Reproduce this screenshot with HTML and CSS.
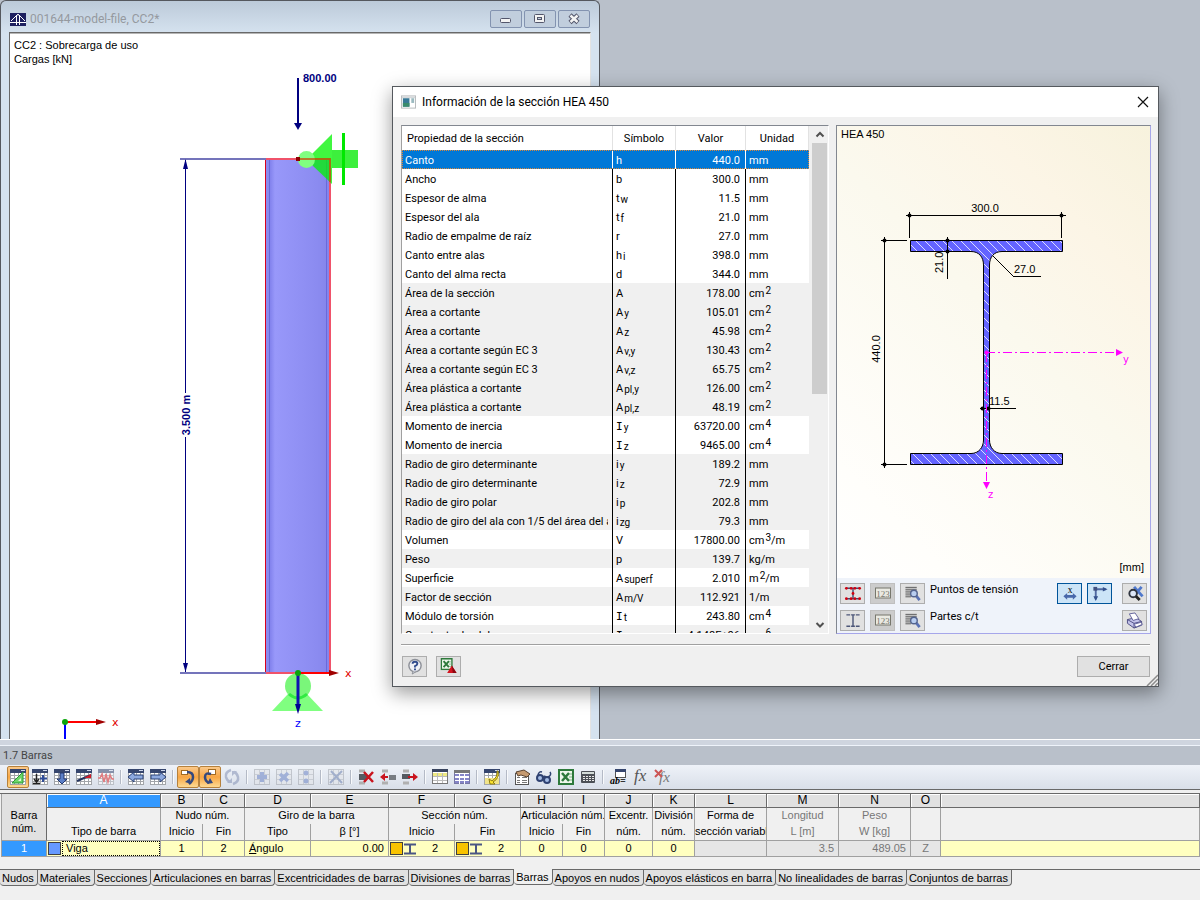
FILE: index.html
```html
<!DOCTYPE html>
<html lang="es">
<head>
    <meta charset="UTF-8">
    <meta name="viewport" content="width=device-width, initial-scale=1.0">
    <title>Información de la sección HEA 450</title>
    <link rel="stylesheet" href="styles.css">
</head>
<body>
    <!-- shared icon parts -->
    <svg class="sprite" aria-hidden="true">
        <symbol id="grid" viewBox="0 0 16 16">
            <rect x="0" y="1" width="16" height="14" fill="#fff"/>
            <path d="M.5 1V15M4.5 1V15M8.5 1V15M12.5 1V15M15.5 1V15M0 6.5H16M0 9.5H16M0 12.5H16M0 15.5H16" stroke="#a2a5a9" fill="none"/>
            <rect x="0" y="0" width="16" height="4" fill="#36466e"/>
            <rect x="11" y="1" width="4" height="1" fill="#cdd6ea"/>
        </symbol>
        <symbol id="cellgrid" viewBox="0 0 16 16">
            <rect x=".5" y=".5" width="15" height="15" fill="#e4e6ea" stroke="#a3a7ae"/>
            <path d="M5.5 1V15M10.5 1V15M1 5.5H15M1 10.5H15" stroke="#b4b8bf"/>
        </symbol>
        <symbol id="numbox" viewBox="0 0 18 16">
            <rect x="1.500" y="2.500" width="15" height="10" fill="#e9e9e2" stroke="#77776d"/>
            <text x="9" y="11" text-anchor="middle" font-size="9" font-family="Liberation Serif, serif" fill="#77776d">123</text>
        </symbol>
        <symbol id="report" viewBox="0 0 18 18">
            <path d="M1 2.500H13M1 4.500H13M1 6.500H8M1 8.500H7M1 10.500H7M1 12.500H7" stroke="#555"/>
            <path d="M12 11L16 16" stroke="#5a72b5" stroke-width="3"/>
            <circle cx="10" cy="9" r="3.500" fill="#b8cdf0" stroke="#54648e" stroke-width="1.500"/>
        </symbol>
        <symbol id="excel" viewBox="0 0 16 16">
            <rect x="1" y="1" width="14" height="14" fill="#eef7ec" stroke="#2e7a3c" stroke-width="2"/>
            <path d="M4 4L11 12M11 4L4 12" stroke="#2e7a3c" stroke-width="2.500"/>
            <path d="M11 5H14M11 8H14M11 11H14" stroke="#7ab383"/>
        </symbol>
        <symbol id="beam" viewBox="0 0 12 12">
            <path d="M0 1.500H12M0 10.500H12" stroke="#4a5684" stroke-width="2"/>
            <path d="M6 1V11" stroke="#4a5684" stroke-width="2"/>
        </symbol>
    </svg>

    <main class="workspace">
        <section class="model-window">
            <header class="model-title">
                <svg class="app-icon" viewBox="0 0 16 13">
                    <rect width="16" height="13" fill="#1d2060"/>
                    <path d="M0 9.500H16" stroke="#fff"/>
                    <path d="M6.500 12V3L8 1L9.500 3V12M7 2L1 8M9 2L15 8" stroke="#fff" fill="none"/>
                </svg>
                <h1>001644-model-file, CC2*</h1>
                <div class="window-buttons">
                    <button type="button" aria-label="Minimizar"><svg viewBox="0 0 14 12"><rect x="1.500" y="5.500" width="10" height="4" rx="1" fill="#f3f3f3" stroke="#53566b"/></svg></button>
                    <button type="button" aria-label="Maximizar"><svg viewBox="0 0 14 12"><rect x="1.500" y="1.500" width="10" height="8" rx="1" fill="#f3f3f3" stroke="#53566b"/><rect x="4.500" y="4.500" width="4" height="2" fill="#c4d0df" stroke="#53566b"/></svg></button>
                    <button type="button" aria-label="Cerrar ventana"><svg viewBox="0 0 14 12"><path d="M3 2L11 9.500M11 2L3 9.500" stroke="#53566b" stroke-width="4.500"/><path d="M3.500 2.500L10.500 9M10.500 2.500L3.500 9" stroke="#f3f3f3" stroke-width="2.500"/></svg></button>
                </div>
            </header>
            <div class="model-view">
                <svg class="model-drawing" viewBox="10 34 580 706" preserveAspectRatio="xMinYMin slice">
                    <defs>
                        <linearGradient id="column">
                            <stop offset="0" stop-color="#8c8cee"/>
                            <stop offset=".07" stop-color="#8484ee"/>
                            <stop offset=".14" stop-color="#9898fa"/>
                            <stop offset=".8" stop-color="#8b8bf0"/>
                            <stop offset="1" stop-color="#8484ea"/>
                        </linearGradient>
                    </defs>
                    <g class="note">
                        <text x="14" y="49">CC2 : Sobrecarga de uso</text>
                        <text x="14" y="63">Cargas [kN]</text>
                    </g>
                    <!-- column -->
                    <rect x="266" y="159" width="64" height="514" fill="url(#column)"/>
                    <path d="M326.500 160V672M269.500 160V672" stroke="#6969dc"/>
                    <path d="M265.500 673V159" stroke="#d8001c"/>
                    <path d="M265 159H331M330 159V673M265 673H330" stroke="#f0526a" stroke-width="2" fill="none"/>
                    <!-- length dimension -->
                    <path d="M180 159H266M180 673H266" stroke="#7474bb" stroke-width="2"/>
                    <path d="M185.500 160V393M185.500 437V672" stroke="#000080"/>
                    <path d="M185.500 159L188 169H183ZM185.500 672L188 663H183Z" fill="#000080"/>
                    <text class="strong" transform="translate(190 415) rotate(-90)" text-anchor="middle">3.500 m</text>
                    <!-- load -->
                    <path d="M298 78V124" stroke="#000080" stroke-width="2"/>
                    <path d="M294 123H302L298 130Z" fill="#000080"/>
                    <text class="strong" x="303" y="82">800.00</text>
                    <!-- upper support -->
                    <path d="M312 154L332 134V184L312 165Z" fill="#00f400" fill-opacity=".75"/>
                    <rect x="332" y="150" width="26" height="18" fill="#0ceb0c" fill-opacity=".8"/>
                    <path d="M343.500 133V185" stroke="#00e800" stroke-width="3"/>
                    <circle cx="306.500" cy="159.500" r="8.500" fill="#80ff80"/>
                    <path d="M298 159H330V182" stroke="#c85010" fill="none" stroke-width="1.500"/>
                    <rect x="296" y="157" width="4" height="4" fill="#900000"/>
                    <!-- lower support -->
                    <path d="M288 694L272 711H323L307 694Z" fill="#80ff80"/>
                    <circle cx="298" cy="686" r="13" fill="#7af67a"/>
                    <path d="M289 694Q298 702 307 694" stroke="#32ea42" stroke-width="3" fill="none"/>
                    <path d="M298 673V705" stroke="#1010b0" stroke-width="3"/>
                    <path d="M295 704H301L298 714Z" fill="#000090"/>
                    <path d="M298 673H330" stroke="#f00" stroke-width="2"/>
                    <path d="M329 670L339 673L329 676Z" fill="#a00000"/>
                    <circle cx="298" cy="673" r="3" fill="#0aa50a"/>
                    <text class="axis red" x="345" y="677">x</text>
                    <text class="axis blue" x="295" y="727">z</text>
                    <!-- global axes -->
                    <path d="M65 722H97" stroke="#f00" stroke-width="2"/>
                    <path d="M96 719L106 722L96 725Z" fill="#a00000"/>
                    <path d="M65 722V740" stroke="#00f" stroke-width="2"/>
                    <circle cx="65" cy="722" r="3" fill="#0aa50a"/>
                    <text class="axis red" x="112" y="726">x</text>
                </svg>
            </div>
        </section>

        <section class="dialog" role="dialog" aria-labelledby="dialogTitle">
            <header class="dialog-title">
                <svg class="dialog-icon" viewBox="0 0 16 14">
                    <rect x=".5" y=".5" width="15" height="13" fill="#fff" stroke="#b5b9bb"/>
                    <rect x="1" y="1" width="14" height="2" fill="#d4d8da"/>
                    <rect x="2" y="3" width="7" height="9" fill="#377997"/>
                    <rect x="2" y="8" width="7" height="4" fill="#398b6c"/>
                    <rect x="11" y="3" width="3" height="5" fill="#9bbac0"/>
                </svg>
                <h2 id="dialogTitle">Información de la sección HEA 450</h2>
                <button class="dialog-close" type="button" aria-label="Cerrar diálogo"><svg viewBox="0 0 12 12"><path d="M1 1L11 11M11 1L1 11" stroke="#111" fill="none" stroke-width="1.200"/></svg></button>
            </header>

            <div class="dialog-body">
                <div class="properties">
                    <div class="properties-scroll">
                        <table class="props">
                            <colgroup><col><col class="c-symbol"><col class="c-value"><col class="c-unit"></colgroup>
                            <thead>
                                <tr><th>Propiedad de la sección</th><th>Símbolo</th><th>Valor</th><th>Unidad</th></tr>
                            </thead>
                            <tbody>
                                <tr class="selected"><td>Canto</td><td>h</td><td>440.0</td><td>mm</td></tr>
                                <tr><td>Ancho</td><td>b</td><td>300.0</td><td>mm</td></tr>
                                <tr><td>Espesor de alma</td><td>t<sub>w</sub></td><td>11.5</td><td>mm</td></tr>
                                <tr><td>Espesor del ala</td><td>t<sub>f</sub></td><td>21.0</td><td>mm</td></tr>
                                <tr><td>Radio de empalme de raíz</td><td>r</td><td>27.0</td><td>mm</td></tr>
                                <tr><td>Canto entre alas</td><td>h<sub>i</sub></td><td>398.0</td><td>mm</td></tr>
                                <tr><td>Canto del alma recta</td><td>d</td><td>344.0</td><td>mm</td></tr>
                                <tr class="alt"><td>Área de la sección</td><td>A</td><td>178.00</td><td>cm<sup>2</sup></td></tr>
                                <tr class="alt"><td>Área a cortante</td><td>A<sub>y</sub></td><td>105.01</td><td>cm<sup>2</sup></td></tr>
                                <tr class="alt"><td>Área a cortante</td><td>A<sub>z</sub></td><td>45.98</td><td>cm<sup>2</sup></td></tr>
                                <tr class="alt"><td>Área a cortante según EC 3</td><td>A<sub>v,y</sub></td><td>130.43</td><td>cm<sup>2</sup></td></tr>
                                <tr class="alt"><td>Área a cortante según EC 3</td><td>A<sub>v,z</sub></td><td>65.75</td><td>cm<sup>2</sup></td></tr>
                                <tr class="alt"><td>Área plástica a cortante</td><td>A<sub>pl,y</sub></td><td>126.00</td><td>cm<sup>2</sup></td></tr>
                                <tr class="alt"><td>Área plástica a cortante</td><td>A<sub>pl,z</sub></td><td>48.19</td><td>cm<sup>2</sup></td></tr>
                                <tr><td>Momento de inercia</td><td><span class="cap-i">I</span><sub>y</sub></td><td>63720.00</td><td>cm<sup>4</sup></td></tr>
                                <tr><td>Momento de inercia</td><td><span class="cap-i">I</span><sub>z</sub></td><td>9465.00</td><td>cm<sup>4</sup></td></tr>
                                <tr class="alt"><td>Radio de giro determinante</td><td>i<sub>y</sub></td><td>189.2</td><td>mm</td></tr>
                                <tr class="alt"><td>Radio de giro determinante</td><td>i<sub>z</sub></td><td>72.9</td><td>mm</td></tr>
                                <tr class="alt"><td>Radio de giro polar</td><td>i<sub>p</sub></td><td>202.8</td><td>mm</td></tr>
                                <tr class="alt"><td><div class="clip">Radio de giro del ala con 1/5 del área del a</div></td><td>i<sub>zg</sub></td><td>79.3</td><td>mm</td></tr>
                                <tr><td>Volumen</td><td>V</td><td>17800.00</td><td>cm<sup>3</sup>/m</td></tr>
                                <tr class="alt"><td>Peso</td><td>p</td><td>139.7</td><td>kg/m</td></tr>
                                <tr><td>Superficie</td><td>A<sub>superf</sub></td><td>2.010</td><td>m<sup>2</sup>/m</td></tr>
                                <tr class="alt"><td>Factor de sección</td><td>A<sub>m/V</sub></td><td>112.921</td><td>1/m</td></tr>
                                <tr><td>Módulo de torsión</td><td><span class="cap-i">I</span><sub>t</sub></td><td>243.80</td><td>cm<sup>4</sup></td></tr>
                                <tr class="alt"><td>Constante de alabeo</td><td><span class="cap-i">I</span></td><td>4.148E+06</td><td>cm<sup>6</sup></td></tr>
                            </tbody>
                        </table>
                    </div>
                    <div class="scrollbar" aria-hidden="true">
                        <svg viewBox="0 0 16 17"><path d="M4.500 10.500L8 7L11.500 10.500" stroke="#505050" stroke-width="2" fill="none"/></svg>
                        <div class="scroll-track"><div class="scroll-thumb"></div></div>
                        <svg viewBox="0 0 16 17"><path d="M4.500 7L8 10.500L11.500 7" stroke="#505050" stroke-width="2" fill="none"/></svg>
                    </div>
                </div>

                <div class="section-panel">
                    <svg class="section-drawing" viewBox="837 126 313 452">
                        <defs>
                            <pattern id="hatch" width="9" height="9" patternUnits="userSpaceOnUse">
                                <rect width="9" height="9" fill="#6464ff"/>
                                <path d="M-1 -1L10 10" stroke="#dcdcff"/>
                            </pattern>
                        </defs>
                        <text x="841" y="138">HEA 450</text>
                        <path d="M910.500 240.500H1062.500V251.500H1002C994 251.500 989.500 257 989.500 265V440C989.500 447 994 453.500 1002 453.500H1062.500V464.500H910.500V453.500H971C979 453.500 983.500 447 983.500 440V265C983.500 257 979 251.500 971 251.500H910.500Z" fill="url(#hatch)" stroke="#000"/>
                        <!-- dimensions -->
                        <path d="M906 215.500H1066M909.500 212V238M1061.500 212V238M884.500 237V468M881 240.500H907M881 464.500H907M947.500 237V279M980 408.500H1016M1013 276.500H1041" stroke="#000" fill="none"/>
                        <path d="M993 256L1013 276" stroke="#000"/>
                        <g fill="#000">
                            <circle cx="909.500" cy="215.500" r="2"/><circle cx="1061.500" cy="215.500" r="2"/>
                            <circle cx="884.500" cy="240.500" r="2"/><circle cx="884.500" cy="464.500" r="2"/>
                            <circle cx="947.500" cy="240.500" r="2"/><circle cx="947.500" cy="251.500" r="2"/>
                            <circle cx="982.500" cy="408.500" r="2"/><circle cx="988.500" cy="408.500" r="2"/>
                        </g>
                        <text x="985" y="212" text-anchor="middle">300.0</text>
                        <text x="1014" y="273">27.0</text>
                        <text x="989" y="405">11.5</text>
                        <text transform="translate(943 273) rotate(-90)">21.0</text>
                        <text transform="translate(880 349) rotate(-90)" text-anchor="middle">440.0</text>
                        <!-- local axes -->
                        <path d="M986 352.500H1116M986.500 353V482" stroke="#f0f" stroke-dasharray="9 3 2 3" fill="none"/>
                        <path d="M1116 349L1123 352.500L1116 356ZM983 482H990L986.500 489Z" fill="#f0f"/>
                        <circle cx="986.500" cy="352.500" r="2" fill="#f0f"/>
                        <text class="local-axis" x="1123" y="363">y</text>
                        <text class="local-axis" x="988" y="498">z</text>
                        <text x="1144" y="571" text-anchor="end">[mm]</text>
                    </svg>
                    <div class="section-tools">
                        <div class="tool-row">
                            <button type="button" aria-label="Mostrar puntos de tensión"><svg viewBox="0 0 18 18"><path d="M2 3.500H16M2 14.500H16M9 3V15" stroke="#444a70" stroke-width="1.500"/><g fill="#d00010"><circle cx="2" cy="3.500" r="1.500"/><circle cx="7" cy="3.500" r="1.500"/><circle cx="11" cy="3.500" r="1.500"/><circle cx="16" cy="3.500" r="1.500"/><circle cx="9" cy="9" r="1.500"/><circle cx="2" cy="14.500" r="1.500"/><circle cx="7" cy="14.500" r="1.500"/><circle cx="11" cy="14.500" r="1.500"/><circle cx="16" cy="14.500" r="1.500"/></g></svg></button>
                            <button class="off" type="button" aria-label="Numerar puntos"><svg viewBox="0 0 18 16"><use href="#numbox"/></svg></button>
                            <button type="button" aria-label="Detalle de puntos"><svg viewBox="0 0 18 18"><use href="#report"/></svg></button>
                            <span>Puntos de tensión</span>
                            <button class="on push" type="button" aria-label="Mostrar dimensiones"><svg viewBox="0 0 18 18"><text x="9" y="8" text-anchor="middle" font-size="10" font-family="Liberation Serif, serif">x</text><path d="M2 12L6 8.500V10.500H12V8.500L16 12L12 15.500V13.500H6V15.500Z" fill="#4868aa"/></svg></button>
                            <button class="on" type="button" aria-label="Mostrar ejes"><svg viewBox="0 0 18 18"><path d="M4.500 15V4.500H15" stroke="#5068a0" stroke-width="2" fill="none"/><path d="M2 12L4.500 17L7 12ZM12 2L17 4.500L12 7Z" fill="#34508c"/><rect x="2" y="2" width="4" height="4" fill="#405080"/></svg></button>
                            <button class="gap" type="button" aria-label="Restablecer zoom"><svg viewBox="0 0 18 18"><path d="M8 2L17 12M16 2L9 10" stroke="#4f78cc" stroke-width="3"/><circle cx="7" cy="9" r="4" fill="#dce6f7" stroke="#303540" stroke-width="2"/><path d="M10 12L14 16" stroke="#222" stroke-width="3"/></svg></button>
                        </div>
                        <div class="tool-row">
                            <button type="button" aria-label="Mostrar partes c/t"><svg viewBox="0 0 18 18"><path d="M2 3H6M7 3H11M12 3H16M2 15H6M7 15H11M12 15H16M9 3V15" stroke="#4c5678" stroke-width="1.500"/></svg></button>
                            <button class="off" type="button" aria-label="Numerar partes"><svg viewBox="0 0 18 16"><use href="#numbox"/></svg></button>
                            <button type="button" aria-label="Detalle de partes"><svg viewBox="0 0 18 18"><use href="#report"/></svg></button>
                            <span>Partes c/t</span>
                            <button class="push" type="button" aria-label="Imprimir"><svg viewBox="0 0 18 18"><path d="M1 8L10 6L16 10V14L8 17L1 12Z" fill="#c3c3ea" stroke="#4b4b83"/><path d="M1 8L8 12L16 10M8 12V17" stroke="#4b4b83" fill="none"/><path d="M3 2L9 1L13 7L7 9Z" fill="#fff" stroke="#62629b"/><path d="M8 13L15 11L17 13L10 16Z" fill="#fff" stroke="#62629b"/></svg></button>
                        </div>
                    </div>
                </div>
            </div>

            <footer class="dialog-footer">
                <button class="icon-button" type="button" aria-label="Ayuda"><svg viewBox="0 0 18 18"><circle cx="9" cy="8" r="6.500" fill="#eef0f6" stroke="#8d9098" stroke-width="1.500"/><path d="M7 14L6 17L11 14" fill="#ccd0d8" stroke="#8d9098"/><path d="M6.500 6Q6.500 4 9 4Q11.500 4 11.500 6Q11.500 7.500 9 8.500V10M9 11V13" stroke="#2f4a8c" stroke-width="2" fill="none"/></svg></button>
                <button class="icon-button" type="button" aria-label="Exportar a Excel"><svg viewBox="0 0 18 18"><use href="#excel" width="13" height="13"/><path d="M7 16L12 8L17 16Z" fill="#d41420"/><path d="M12 8L13 16H17Z" fill="#8e0810"/></svg></button>
                <button class="close-button" type="button">Cerrar</button>
                <svg class="grip" viewBox="0 0 12 12"><path d="M1 12L12 1M5 12L12 5M9 12L12 9" stroke="#8c8c8c" stroke-width="1.500"/></svg>
            </footer>
        </section>
    </main>

    <section class="data-panel">
        <h2 class="panel-title">1.7 Barras</h2>
        <div class="toolbar" role="toolbar" aria-label="Tabla">
            <button class="active" type="button" aria-label="Editar tabla"><svg viewBox="0 0 16 16"><use href="#grid"/><path d="M2 14L13 3V14Z" fill="#6cd668" stroke="#2b9a36"/><path d="M8 12L11 9V12Z" fill="#e3f8e0"/></svg></button>
            <button type="button" aria-label="Insertar fila"><svg viewBox="0 0 16 16"><use href="#grid"/><path d="M4.500 5V12M2 10L4.500 13L7 10M1 14.500H8" stroke="#222" stroke-width="1.500" fill="none"/><path d="M11 6V13M8 9.500H15" stroke="#2f4c98" stroke-width="2"/></svg></button>
            <button type="button" aria-label="Rellenar hacia abajo"><svg viewBox="0 0 16 16"><use href="#grid"/><path d="M6 4H10V10H13L8 15L3 10H6Z" fill="#5b7fc8" stroke="#22376c"/></svg></button>
            <button type="button" aria-label="Diagrama"><svg viewBox="0 0 16 16"><use href="#grid"/><path d="M1 12L15 6" stroke="#23335f" stroke-width="2"/><path d="M8 9L15 5V9Z" fill="#d01c28"/></svg></button>
            <button class="dim" type="button" aria-label="Resultados"><svg viewBox="0 0 16 16"><use href="#grid"/><path d="M0 9H2L4 5L6 13L8 5L10 13L12 6L14 10H16" stroke="#e02626" stroke-width="1.500" fill="none"/></svg></button>
            <i></i>
            <button type="button" aria-label="Tabla anterior"><svg viewBox="0 0 16 16"><use href="#grid"/><path d="M0 8L6 3V6H15V10H6V13Z" fill="#8da9df" stroke="#2b4277"/></svg></button>
            <button type="button" aria-label="Tabla siguiente"><svg viewBox="0 0 16 16"><use href="#grid"/><path d="M16 8L10 3V6H1V10H10V13Z" fill="#8da9df" stroke="#2b4277"/></svg></button>
            <i></i>
            <button class="active" type="button" aria-label="Seleccionar en gráfico"><svg viewBox="0 0 16 16"><rect x="1.500" y="1.500" width="6" height="4" fill="#fff" stroke="#a36b20"/><path d="M7 3Q13 3 13 8Q13 12 9 15" stroke="#34497f" stroke-width="2.500" fill="none"/><path d="M5 13L11 15L10 9Z" fill="#34497f"/></svg></button>
            <button class="active" type="button" aria-label="Seleccionar en tabla"><svg viewBox="0 0 16 16"><rect x="6.500" y=".5" width="7" height="5" fill="#fff" stroke="#a36b20"/><path d="M9 5Q3 3 3 8Q3 12 7 14" stroke="#34497f" stroke-width="2.500" fill="none"/><path d="M11 14L5 15L8 9Z" fill="#34497f"/></svg></button>
            <button class="dim" type="button" aria-label="Sincronizar"><svg viewBox="0 0 16 16"><path d="M7 1Q1 3 2 8Q3 12 6 13M9 15Q15 13 14 8Q13 4 10 3" stroke="#8592b5" stroke-width="2.500" fill="none"/><path d="M3 14H8V9ZM8 2H13L8 7Z" fill="#8592b5"/></svg></button>
            <i></i>
            <button class="dim" type="button" aria-label="Añadir"><svg viewBox="0 0 16 16"><use href="#cellgrid"/><path d="M8 3V13M3 8H13" stroke="#6b83c4" stroke-width="4"/></svg></button>
            <button class="dim" type="button" aria-label="Multiplicar"><svg viewBox="0 0 16 16"><use href="#cellgrid"/><path d="M4 5L12 12M12 4L4 12" stroke="#6b83c4" stroke-width="3.500"/></svg></button>
            <button class="dim" type="button" aria-label="Dividir"><svg viewBox="0 0 16 16"><use href="#cellgrid"/><circle cx="8" cy="4" r="2.500" fill="#6b83c4"/><circle cx="8" cy="12" r="2.500" fill="#6b83c4"/></svg></button>
            <i></i>
            <button class="dim" type="button" aria-label="Vaciar celdas"><svg viewBox="0 0 16 16"><use href="#cellgrid"/><path d="M3 2L14 14M14 2L2 14" stroke="#6b7fae" stroke-width="2"/></svg></button>
            <i></i>
            <button type="button" aria-label="Borrar fila"><svg viewBox="0 0 16 16"><path d="M1 2H7M1 14H7" stroke="#b0b0b0" stroke-width="3"/><rect x="1" y="5" width="8" height="6" fill="#555b62"/><path d="M6 3L15 13M15 3L6 13" stroke="#c9141e" stroke-width="2.500"/></svg></button>
            <button type="button" aria-label="Fila anterior"><svg viewBox="0 0 16 16"><path d="M2 2H8M2 14H8" stroke="#b0b0b0" stroke-width="3"/><rect x="9" y="6" width="7" height="5" fill="#777c82"/><path d="M8 8H3" stroke="#c9141e" stroke-width="2"/><path d="M0 8L5 4V12Z" fill="#c9141e"/></svg></button>
            <button type="button" aria-label="Fila siguiente"><svg viewBox="0 0 16 16"><path d="M1 2H7M1 14H7" stroke="#b0b0b0" stroke-width="3"/><rect x="0" y="5" width="8" height="5" fill="#555b62"/><path d="M6 8H12" stroke="#c9141e" stroke-width="2"/><path d="M16 8L11 4V12Z" fill="#c9141e"/></svg></button>
            <i></i>
            <button type="button" aria-label="Mostrar columnas"><svg viewBox="0 0 16 16"><rect x=".5" y="1.500" width="15" height="13" fill="#fff" stroke="#777"/><rect x="1" y="4" width="14" height="4" fill="#eee982"/><path d="M5.500 4V14M10.500 4V14M1 7.500H15M1 11.500H15" stroke="#bbb"/><rect y="0" width="16" height="3" fill="#38435e"/></svg></button>
            <button type="button" aria-label="Mostrar filas"><svg viewBox="0 0 16 16"><rect x=".5" y="1.500" width="15" height="13" fill="#fff" stroke="#7777a5"/><path d="M1 6H15M1 10H15M1 13H15" stroke="#8585c8" stroke-width="2"/><path d="M5.500 4V15M10.500 4V15" stroke="#fff"/><rect y="1" width="16" height="3" fill="#777"/></svg></button>
            <i></i>
            <button type="button" aria-label="Relaciones"><svg viewBox="0 0 16 16"><use href="#grid"/><rect x="1" y="9" width="14" height="6" fill="#f1e48a"/><path d="M13 2Q14 8 8 12L5 10L6 15H11L9 13Q16 9 14 2Z" fill="#ffe82f" stroke="#8e7b11"/></svg></button>
            <i></i>
            <button type="button" aria-label="Propiedades"><svg viewBox="0 0 16 16"><rect x="1.500" y="4.500" width="13" height="11" fill="#fff" stroke="#555"/><path d="M3 8.500H6M3 11.500H6M3 13.500H6M8 8.500H13M8 11.500H13M8 13.500H13" stroke="#777"/><path d="M2 3L10 1L16 5L13 8L7 6L4 7Z" fill="#c59a70" stroke="#59422f"/></svg></button>
            <button type="button" aria-label="Vista"><svg viewBox="0 0 16 16"><circle cx="4" cy="9" r="3" fill="#a4bce5" stroke="#2f4272" stroke-width="2"/><circle cx="11" cy="11" r="3" fill="#a4bce5" stroke="#2f4272" stroke-width="2"/><path d="M2 6Q3 2 6 3M7 9Q8 6 10 8M12 8Q16 6 14 3" stroke="#2f4272" fill="none" stroke-width="1.500"/></svg></button>
            <button type="button" aria-label="Excel"><svg viewBox="0 0 16 16"><use href="#excel"/></svg></button>
            <button type="button" aria-label="Calculadora"><svg viewBox="0 0 16 16"><rect x="1" y="2" width="14" height="12" rx="1" fill="#4c5056"/><rect x="2" y="3" width="12" height="2" fill="#d3dbd8"/><path d="M3 7.500H14M3 9.500H14M3 11.500H14" stroke="#e8e8e8" stroke-dasharray="2 1"/></svg></button>
            <i></i>
            <button type="button" aria-label="Definir texto"><svg viewBox="0 0 16 16"><rect x="5.500" y="1.500" width="10" height="7" fill="#fff" stroke="#555"/><rect x="5" y="0" width="11" height="3" fill="#36466e"/><text x="0" y="15" font-size="10" font-weight="bold" font-style="italic" font-family="Liberation Serif, serif">ab=</text></svg></button>
            <button type="button" aria-label="Función"><svg viewBox="0 0 16 16"><text x="2" y="12" font-size="17" font-style="italic" font-family="Liberation Serif, serif" fill="#555">fx</text></svg></button>
            <button type="button" aria-label="Borrar función"><svg viewBox="0 0 16 16"><text x="5" y="13" font-size="15" font-style="italic" font-family="Liberation Serif, serif" fill="#777">fx</text><path d="M1 1L8 8M8 1L1 8" stroke="#cc5555" stroke-width="2"/></svg></button>
        </div>

        <table class="sheet">
            <colgroup>
                <col class="w46"><col class="w114"><col class="w42"><col class="w42"><col class="w66"><col class="w78"><col class="w66"><col class="w66"><col class="w42"><col class="w42"><col class="w48"><col class="w42"><col class="w72"><col class="w72"><col class="w72"><col class="w30"><col>
            </colgroup>
            <thead>
                <tr class="letters">
                    <th class="corner" rowspan="3">Barra<br>núm.</th>
                    <th class="picked">A</th><th>B</th><th>C</th><th>D</th><th>E</th><th>F</th><th>G</th><th>H</th><th>I</th><th>J</th><th>K</th><th>L</th><th>M</th><th>N</th><th>O</th><th></th>
                </tr>
                <tr class="groups">
                    <th></th>
                    <th colspan="2">Nudo núm.</th>
                    <th colspan="2">Giro de la barra</th>
                    <th colspan="2">Sección núm.</th>
                    <th colspan="2">Articulación núm.</th>
                    <th>Excentr.</th>
                    <th>División</th>
                    <th>Forma de</th>
                    <th class="muted">Longitud</th>
                    <th class="muted">Peso</th>
                    <th></th>
                    <th></th>
                </tr>
                <tr class="names">
                    <th>Tipo de barra</th><th>Inicio</th><th>Fin</th><th>Tipo</th><th>β [°]</th><th>Inicio</th><th>Fin</th><th>Inicio</th><th>Fin</th><th>núm.</th><th>núm.</th><th>sección variabl</th><th class="muted">L [m]</th><th class="muted">W [kg]</th><th></th><th></th>
                </tr>
            </thead>
            <tbody>
                <tr>
                    <th class="picked">1</th>
                    <td class="type"><div class="type-cell"><span class="swatch blue-swatch"></span><span class="focus">Viga</span></div></td>
                    <td>1</td>
                    <td>2</td>
                    <td class="left"><u>Á</u>ngulo</td>
                    <td class="right">0.00</td>
                    <td class="type"><div class="type-cell"><span class="swatch"></span><svg viewBox="0 0 12 12"><use href="#beam"/></svg><span class="num">2</span></div></td>
                    <td class="type"><div class="type-cell"><span class="swatch"></span><svg viewBox="0 0 12 12"><use href="#beam"/></svg><span class="num">2</span></div></td>
                    <td>0</td>
                    <td>0</td>
                    <td>0</td>
                    <td>0</td>
                    <td class="locked"></td>
                    <td class="locked right">3.5</td>
                    <td class="locked right">489.05</td>
                    <td class="locked">Z</td>
                    <td></td>
                </tr>
            </tbody>
        </table>

        <nav class="tabs" role="tablist">
            <button role="tab" type="button">Nudos</button>
            <button role="tab" type="button">Materiales</button>
            <button role="tab" type="button">Secciones</button>
            <button role="tab" type="button">Articulaciones en barras</button>
            <button role="tab" type="button">Excentricidades de barras</button>
            <button role="tab" type="button">Divisiones de barras</button>
            <button role="tab" type="button" aria-selected="true">Barras</button>
            <button role="tab" type="button">Apoyos en nudos</button>
            <button role="tab" type="button">Apoyos elásticos en barra</button>
            <button role="tab" type="button">No linealidades de barras</button>
            <button role="tab" type="button">Conjuntos de barras</button>
        </nav>
    </section>
</body>
</html>
```

FILE: styles.css
```css
* {
    box-sizing: border-box;
}

body {
    display: flex;
    flex-direction: column;
    min-height: 100vh;
    margin: 0;
    background-color: #f0f0f0;
    color: #000;
    font-family: Roboto, Arial, sans-serif;
    font-size: 11px;
}

h1, h2 {
    margin: 0;
    font-weight: normal;
}

button {
    display: flex;
    align-items: center;
    justify-content: center;
    padding: 0;
    font: inherit;
    color: inherit;
}

svg {
    display: block;
}

.sprite {
    position: absolute;
    width: 0;
    height: 0;
}

/* workspace */
.workspace {
    position: relative;
    flex: 1;
    overflow: hidden;
    background-color: #b9c0ca;
}

.model-window {
    position: absolute;
    top: 0;
    left: 0;
    bottom: 0;
    width: 50%;
    display: flex;
    flex-direction: column;
    padding: 0 8px;
    border: 1px solid #55585e;
    border-bottom: none;
    border-radius: 6px 6px 0 0;
    background: linear-gradient(#bccad9, #d5e2ef 32px);
}

.model-title {
    display: flex;
    align-items: center;
    gap: 4px;
    height: 31px;
    padding-top: 5px;
}

.app-icon {
    width: 16px;
    height: 13px;
    margin-left: 1px;
}

.model-title h1 {
    flex: 1;
    color: #95999f;
    font-size: 12px;
}

.window-buttons {
    display: flex;
    gap: 2px;
    margin-right: 1px;
}

.window-buttons button {
    width: 32px;
    height: 18px;
    border: 1px solid #8393b0;
    border-radius: 2px;
    background-color: #c1cedd;
}

.window-buttons svg {
    width: 14px;
    height: 12px;
}

.model-view {
    flex: 1;
    min-height: 0;
    border: 1px solid #696969;
    border-right-color: #e3e3e3;
    border-bottom: none;
    background-color: #fff;
}

.model-drawing {
    width: 100%;
    height: 100%;
    border-top: 1px solid #b5b5b5;
    font-family: "Liberation Sans", Arial, sans-serif;
}

.strong {
    fill: #000080;
    font-weight: bold;
}

.axis {
    font-family: "DejaVu Sans", sans-serif;
}

.red {
    fill: #e00000;
}

.blue {
    fill: #0000ff;
}

/* dialog */
.dialog {
    position: absolute;
    top: 86px;
    left: 392px;
    width: 767px;
    display: flex;
    flex-direction: column;
    border: 1px solid #55595e;
    background-color: #f0f0f0;
    box-shadow: 0 6px 18px rgba(0, 0, 0, 0.4);
}

.dialog-title {
    display: flex;
    align-items: center;
    gap: 6px;
    height: 30px;
    padding: 0 9px 0 8px;
    background-color: #fff;
}

.dialog-icon {
    width: 15px;
    height: 14px;
}

.dialog-title h2 {
    flex: 1;
    font-size: 12px;
}

.dialog-close {
    width: 12px;
    height: 12px;
    border: none;
    background: none;
}

.dialog-close svg {
    width: 12px;
    height: 12px;
}

.dialog-body {
    display: flex;
    gap: 7px;
    height: 527px;
    padding: 8px 7px 10px 8px;
}

.properties {
    display: flex;
    flex: 1;
    min-width: 0;
    border-top: 1px solid #828790;
    border-left: 1px solid #a0a0a0;
    border-right: 1px solid #fff;
    border-bottom: 1px solid #fff;
    background-color: #f0f0f0;
}

.properties-scroll {
    flex: 1;
    overflow: hidden;
}

.props {
    width: 100%;
    table-layout: fixed;
    border-collapse: separate;
    border-spacing: 0;
    background-color: #fff;
}

.c-symbol {
    width: 63px;
}

.c-value {
    width: 70px;
}

.c-unit {
    width: 63px;
}

.props th {
    height: 24px;
    padding: 0;
    border-right: 1px solid #e2e2e2;
    font-weight: normal;
}

.props th:first-child {
    padding-left: 5px;
    text-align: left;
}

.props td {
    height: 19px;
    padding: 2px 4px 0 3px;
    border-right: 1px solid #000;
    line-height: 15px;
    white-space: nowrap;
    overflow: hidden;
}

.props td:nth-child(3) {
    padding-right: 5px;
    text-align: right;
}

.props td:last-child {
    border-right: none;
}

.props .alt td {
    background-color: #f0f0f0;
}

.props .selected td {
    border-right-color: #fff;
    background-color: #0078d7;
    color: #fff;
}

.props .selected {
    outline: 1px dotted #d9873a;
    outline-offset: -1px;
}

.clip {
    overflow: hidden;
}

.props sub,
.props sup {
    position: relative;
    padding-left: 1px;
    font-size: 10px;
    line-height: 1px;
    vertical-align: baseline;
}

.props sub {
    top: 1px;
}

.props sup {
    top: -3px;
}

.cap-i {
    font-family: "DejaVu Sans Mono", monospace;
    line-height: 1px;
}

.scrollbar {
    display: flex;
    flex-direction: column;
    width: 19px;
    padding: 0 0 0 3px;
}

.scrollbar svg {
    width: 16px;
    height: 17px;
}

.scroll-track {
    flex: 1;
}

.scroll-thumb {
    width: 15px;
    height: 53%;
    background-color: #cdcdcd;
}

.section-panel {
    display: flex;
    flex-direction: column;
    width: 315px;
    border: 1px solid #828790;
    border-right-color: #a6a6ea;
    border-bottom-color: #a6a6ea;
    background-color: #eff3fa;
}

.section-drawing {
    flex: 1;
    min-height: 0;
    background: linear-gradient(225deg, #f7f2dd, #fcf5e6 22%, #fbf9ee 45%, #fffefb 85%, #fff);
    font-family: "Liberation Sans", Arial, sans-serif;
}

.local-axis {
    fill: #f0f;
    font-family: "DejaVu Sans", sans-serif;
    font-size: 10px;
}

.section-tools {
    display: grid;
    gap: 6px;
    padding: 5px 3px 2px;
}

.tool-row {
    display: flex;
    gap: 5px;
}

.tool-row button,
.icon-button {
    width: 25px;
    height: 21px;
    border: 1px solid #adadad;
    background-color: #e1e1e1;
}

.tool-row svg,
.icon-button svg {
    width: 18px;
    height: 17px;
}

.tool-row .off {
    border-color: #bfbfbf;
    background-color: #cccccc;
}

.tool-row .on {
    border-color: #00549a;
    background-color: #cce4f7;
}

.tool-row .push {
    margin-left: auto;
}

.tool-row .gap {
    margin-left: 5px;
}

.dialog-footer {
    position: relative;
    display: flex;
    gap: 8px;
    height: 42px;
    margin: 0 8px;
    padding-top: 11px;
    border-top: 1px solid #a0a0a0;
    box-shadow: inset 0 1px #fff;
}

.icon-button {
    margin-left: 1px;
}

.close-button {
    width: 73px;
    height: 21px;
    margin-left: auto;
    border: 1px solid #adadad;
    background-color: #e1e1e1;
}

.grip {
    position: absolute;
    right: -8px;
    bottom: 0;
    width: 12px;
    height: 12px;
}

/* data panel */
.data-panel {
    height: 161px;
    border-top: 1px solid #fff;
    background-color: #f0f0f0;
    font-family: "Liberation Sans", Arial, sans-serif;
}

.panel-title {
    height: 25px;
    padding-left: 3px;
    border-top: 5px solid #cfd5df;
    background-color: #b9c0ca;
    box-shadow: inset 0 1px #eef3fa;
    color: #444;
    font-family: Roboto, sans-serif;
    font-size: 11px;
    line-height: 22px;
}

.toolbar {
    display: flex;
    align-items: center;
    height: 25px;
    padding-left: 7px;
    border-bottom: 1px solid #696969;
    background: linear-gradient(#eef2f8, #d9dfe9);
}

.toolbar button {
    width: 22px;
    height: 22px;
    border: 1px solid transparent;
    border-radius: 2px;
    background: none;
}

.toolbar .active {
    border-color: #b6813c;
    background: linear-gradient(#fbc98a, #f8a643 50%, #fdda93);
}

.toolbar svg {
    width: 16px;
    height: 16px;
    overflow: visible;
}

.toolbar .dim svg {
    opacity: 0.55;
}

.toolbar i {
    width: 1px;
    height: 14px;
    margin: 0 4px 0 3px;
    background-color: #b4bac6;
    box-shadow: 1px 0 #f8fafc;
}

.sheet {
    width: 100%;
    margin-top: 3px;
    padding-left: 1px;
    table-layout: fixed;
    border-collapse: separate;
    border-spacing: 0;
    border-top: 1px solid #696969;
}

.w30 { width: 30px; }
.w42 { width: 42px; }
.w46 { width: 46px; }
.w48 { width: 48px; }
.w66 { width: 66px; }
.w72 { width: 72px; }
.w78 { width: 78px; }
.w114 { width: 114px; }

.sheet th,
.sheet td {
    height: 16px;
    padding: 0;
    border-right: 1px solid #a0a0a0;
    font-weight: normal;
    line-height: 15px;
    text-align: center;
    vertical-align: top;
    white-space: nowrap;
    overflow: hidden;
}

.sheet .letters th {
    height: 14px;
    border-right-color: #696969;
    border-bottom: 1px solid #696969;
    background-color: #e1e1e1;
    box-shadow: inset 1px 1px #fff;
    font-size: 12px;
    line-height: 13px;
}

.sheet .letters .picked {
    background-color: #3399ff;
    color: #fff;
}

.sheet .letters .corner {
    padding-top: 15px;
    border-bottom-color: #a0a0a0;
    border-left: 1px solid #a0a0a0;
    box-shadow: none;
    font-size: 11px;
}

.sheet .names th {
    height: 17px;
    border-bottom: 1px solid #a0a0a0;
}

.sheet td {
    border-bottom: 1px solid #a0a0a0;
    background-color: #ffffc0;
}

.sheet tbody th {
    border: 1px solid #a0a0a0;
    border-top: none;
    background-color: #3399ff;
    color: #fff;
}

.sheet .locked {
    background-color: #e6e6e6;
    color: #777;
}

.sheet .muted {
    color: #777;
}

.sheet .left {
    padding-left: 4px;
    text-align: left;
}

.sheet .right {
    padding-right: 4px;
    text-align: right;
}

.type-cell {
    display: flex;
    align-items: center;
    gap: 1px;
    padding-left: 1px;
}

.type-cell svg {
    width: 12px;
    height: 12px;
}

.swatch {
    width: 13px;
    height: 13px;
    border: 1px solid #404040;
    background-color: #f8c300;
}

.blue-swatch {
    background-color: #6699ff;
}

.focus {
    flex: 1;
    height: 15px;
    padding-left: 3px;
    border: 1px dotted #000;
    line-height: 13px;
    text-align: left;
}

.num {
    flex: 1;
    padding-right: 1px;
}

.tabs {
    display: flex;
    margin-top: 12px;
    border-top: 1px solid #696969;
}

.tabs button {
    height: 16px;
    padding: 1px 3px 0 2px;
    border: 1px solid #696969;
    border-width: 0 1px 1px 0;
    border-radius: 0 0 4px 4px;
    background-color: #e1e1e1;
    white-space: nowrap;
}

.tabs [aria-selected="true"] {
    margin-top: -1px;
    background-color: #f0f0f0;
}
```
